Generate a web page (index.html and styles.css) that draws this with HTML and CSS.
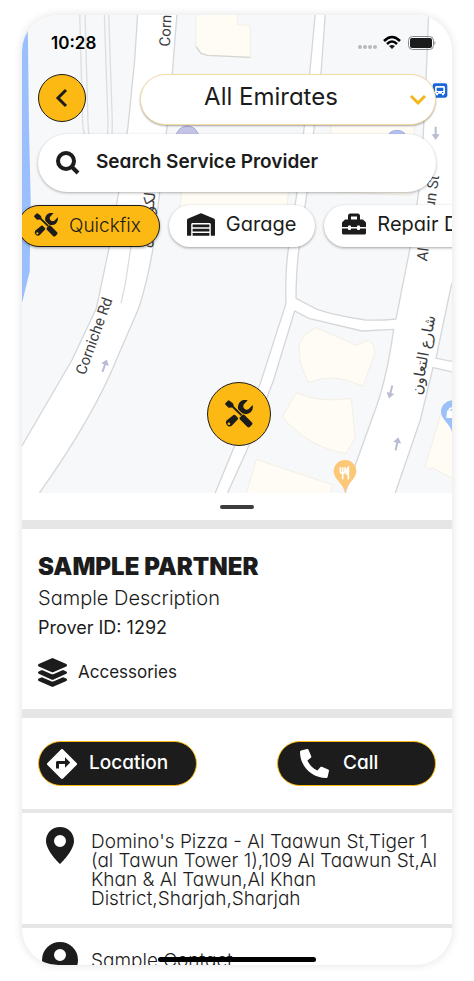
FILE: index.html
```html
<!doctype html>
<html lang="en">
    <head>
        <meta charset="utf-8">
        <meta name="viewport" content="width=device-width, initial-scale=1">
        <title>Sample Partner</title>
        <link rel="stylesheet" href="styles.css">
    </head>
    <body>
        <!-- shared icons -->
        <svg class="is-hidden">
            <symbol id="tools" viewBox="0 0 86 86">
                <path d="M1 10L9 2Q11 0 14 2L25 11 27 19 53 45 49 49 22 23 11 24 1 14Q0 12 1 10z"/>
                <path d="M46 53L54 45Q57 43 60 46L83 69Q86 72 83 76L76 83Q72 86 69 83L46 60Q43 56 46 53z"/>
                <path d="M70 1Q55-4 45 7 37 17 41 29L53 41Q68 47 79 38 88 28 85 15L73 28Q66 32 59 26 54 20 58 13z"/>
                <path fill-rule="evenodd" d="M26 46Q29 44 32 47L39 54Q42 57 39 60L20 80A12 12 0 0 1 4 64zM12 69a4 4 0 1 0 0 8 4 4 0 0 0 0-8z"/>
            </symbol>
        </svg>
        <main class="phone">
            <section class="map">
                <svg class="map-canvas" viewBox="65 45 1290 1434" preserveAspectRatio="xMidYMin slice">
                    <rect class="land" x="65" y="45" width="1290" height="1434"/>
                    <path class="water" d="M60 45H82L86 380 91 600 88 815 66 905H60z"/>

                    <!-- buildings -->
                    <g class="building">
                        <path d="M587 40V140L602 160 622 166 750 172V76L712 74V40z"/>
                        <path d="M992 360H1243L1232 586 990 575z"/>
                        <path d="M545 560H866L858 640H538z"/>
                        <path d="M947 983Q905 1002 896 1040 893 1090 925 1148 1000 1115 1088 1159L1124 1060 1120 1035 1104 1021 1068 1036Q1010 1010 947 983z"/>
                        <path d="M888 1178L846 1250Q920 1340 1037 1361L1064 1315 1053 1195Q960 1210 888 1178z"/>
                        <path d="M768 1378L998 1455 985 1490H735z"/>
                        <path d="M1322 1240L1274 1400 1290 1410 1293 1402 1360 1437V1240z"/>
                    </g>
                    <path class="building-edge" d="M587 140L602 160 622 166 750 172"/>

                    <!-- roads -->
                    <path class="lane" d="M238 40L247 370Q250 400 260 440M254 40L263 370 268 440M312 40L323 370 320 440M325 40L336 370 334 440"/>
                    <g class="road">
                        <path d="M412 40L403 180 383 380 355 578 325 750 288 925 215 1080 40 1380 60 1560 118 1478Q280 1250 350 1075L415 925Q440 850 458 745L478 578 500 380 516 220 530 40z"/>
                        <path d="M1285 40L1277 240 1268 420 1255 578 1230 740 1187 957Q1140 962 1095 960 1000 945 950 928L887 895Q888 800 897 740L920 578 942 378 962 220 975 40H945L928 220 912 378 890 578 865 740Q854 810 857 910L780 1150 645 1478 645 1500H672L682 1478 740 1350 820 1140 883 933 925 955 1085 993 1180 988Q1160 1130 1128 1220L1035 1478V1500H1180L1185 1478 1260 1260 1298 1103 1370 1119V1087L1307 1075 1352 860 1370 800V40z"/>
                    </g>
                    <path class="lane" d="M392 740L375 850 362 910"/>

                    <!-- one way arrows -->
                    <g class="arrow">
                        <path d="M-3 20V-3H-12L0-20 12-3H3V20z" transform="translate(313 1097) rotate(20)"/>
                        <path d="M-3 20V-3H-12L0-20 12-3H3V20z" transform="translate(1306 400) rotate(180)"/>
                        <path d="M-3 20V-3H-12L0-20 12-3H3V20z" transform="translate(1171 1176) rotate(194)"/>
                        <path d="M-3 20V-3H-12L0-20 12-3H3V20z" transform="translate(1190 1331) rotate(12)"/>
                    </g>

                    <!-- street names -->
                    <g class="street">
                        <text transform="translate(508 140) rotate(-87)">Corniche Rd</text>
                        <text transform="translate(254 1127) rotate(-70)">Corniche Rd</text>
                        <text transform="translate(1280 785) rotate(-82)">Al Taawun St</text>
                        <text text-anchor="middle" transform="translate(1284 1068) rotate(-80)">شارع التعاون</text>
                        <text text-anchor="middle" transform="translate(463 600) rotate(-84)">شارع الكورنيش</text>
                    </g>

                    <!-- places -->
                    <circle class="place" cx="561" cy="412" r="34"/>
                    <circle class="place is-blue" cx="1190" cy="425" r="34"/>
                    <rect class="bus" x="1297" y="250" width="44" height="43" rx="7"/>
                    <path fill="#fff" d="M1308 258h22q4 0 4 5v18h-3v5h-6v-5h-12v5h-6v-5h-3v-18q0-5 4-5z"/>
                    <path class="bus" d="M1309 263h20v10h-20zM1309 276h4v3h-4zM1325 276h4v3h-4z"/>
                    <path class="food" d="M1034 1380a34 34 0 0 1 34 34c0 24-28 34-34 65-6-31-34-41-34-65a34 34 0 0 1 34-34z"/>
                    <path class="cutlery" d="M1020 1402v10q0 8 7 8t7-8v-10M1027 1402v36M1044 1438v-36q-6 4-5 20h5"/>
                    <path class="shop" d="M1356 1201a34 34 0 0 0-34 34c0 24 28 34 34 65z"/>
                    <path fill="#fff" d="M1340 1232h16v22h-18zM1344 1232q0-10 12-10v5q-7 0-7 5z"/>
                </svg>

                <button class="pin" type="button" aria-label="Quickfix provider">
                    <svg class="pin-icon"><use href="#tools"/></svg>
                </button>

                <div class="overlay">
                    <div class="status">
                        <span class="time">10:28</span>
                        <svg width="80" height="16" viewBox="0 0 80 16">
                            <g fill="#b9babd">
                                <circle cx="4" cy="12" r="2"/><circle cx="9" cy="12" r="2"/><circle cx="14" cy="12" r="2"/><circle cx="19" cy="12" r="2"/>
                            </g>
                            <path d="M28 6Q36-2 44 6M31 9Q36 4 41 9" fill="none" stroke="#000" stroke-width="2.500"/>
                            <path d="M33 11Q36 9 39 11L36 14z"/>
                            <rect x="52.500" y="1.500" width="25" height="13" rx="4" fill="none" stroke="#8a8a8c"/>
                            <rect x="54" y="3" width="22" height="10" rx="2"/>
                            <path d="M78.500 6q2 2 0 4z" fill="#8a8a8c"/>
                        </svg>
                    </div>
                    <div class="top-row">
                        <button class="back" type="button" aria-label="Back">
                            <svg width="20" height="22" viewBox="0 0 20 22"><path d="M14 3L6 11 14 19"/></svg>
                        </button>
                        <div class="emirates">
                            <select aria-label="Emirate">
                                <option>All Emirates</option>
                                <option>Dubai</option>
                                <option>Sharjah</option>
                            </select>
                            <svg class="chevron" width="18" height="12" viewBox="0 0 18 12"><path d="M2 2L9 9 16 2"/></svg>
                        </div>
                    </div>
                    <label class="search">
                        <svg width="24" height="24" viewBox="0 0 24 24"><circle cx="10" cy="10" r="8"/><path d="M16 16L22 22"/></svg>
                        <input type="search" placeholder="Search Service Provider" aria-label="Search Service Provider">
                    </label>
                    <nav class="chips">
                        <button class="chip is-primary" type="button">
                            <svg width="24" height="24"><use href="#tools"/></svg>
                            Quickfix
                        </button>
                        <button class="chip" type="button">
                            <svg width="28" height="23" viewBox="0 0 640 512"><path d="M504 352H136.400c-4.400 0-8 3.600-8 8l-.1 48c0 4.400 3.600 8 8 8H504c4.400 0 8-3.600 8-8v-48c0-4.400-3.600-8-8-8zm0 96H136.100c-4.400 0-8 3.600-8 8l-.1 48c0 4.400 3.600 8 8 8h368c4.400 0 8-3.600 8-8v-48c0-4.400-3.600-8-8-8zm0-192H136.600c-4.400 0-8 3.600-8 8l-.1 48c0 4.400 3.600 8 8 8H504c4.400 0 8-3.600 8-8v-48c0-4.400-3.600-8-8-8zm106.500-139L338.400 3.700a48.150 48.150 0 0 0-36.900 0L29.500 117C11.700 124.500 0 141.900 0 161.300V504c0 4.400 3.600 8 8 8h80c4.400 0 8-3.600 8-8V256c0-17.600 14.600-32 32.600-32h382.800c18 0 32.600 14.400 32.600 32v248c0 4.400 3.600 8 8 8h80c4.400 0 8-3.600 8-8V161.300c0-19.400-11.700-36.800-29.500-44.300z"/></svg>
                            Garage
                        </button>
                        <button class="chip is-last" type="button">
                            <svg width="24" height="24" viewBox="0 0 512 512"><path d="M502.630 214.630l-45.250-45.250c-6-6-14.140-9.370-22.630-9.370H384V80c0-26.510-21.490-48-48-48H176c-26.510 0-48 21.490-48 48v80H77.250c-8.490 0-16.620 3.370-22.630 9.370L9.370 214.630c-6 6-9.370 14.140-9.370 22.630V320h128v-16c0-8.840 7.160-16 16-16h32c8.840 0 16 7.160 16 16v16h128v-16c0-8.840 7.160-16 16-16h32c8.840 0 16 7.160 16 16v16h128v-82.750c0-8.480-3.370-16.620-9.370-22.620zM320 160H192V96h128v64zm64 208c0 8.840-7.160 16-16 16h-32c-8.840 0-16-7.160-16-16v-16H192v16c0 8.840-7.160 16-16 16h-32c-8.840 0-16-7.160-16-16v-16H0v96c0 17.670 14.330 32 32 32h448c17.670 0 32-14.330 32-32v-96H384v16z"/></svg>
                            Repair D
                        </button>
                    </nav>
                </div>
            </section>

            <div class="handle"></div>

            <section class="partner">
                <h1 class="title">SAMPLE PARTNER</h1>
                <p class="description">Sample Description</p>
                <p class="prover">Prover ID: 1292</p>
                <div class="service">
                    <svg width="29" height="29" viewBox="0 0 512 512"><path d="M12.410 148.020l232.940 105.670c6.800 3.090 14.490 3.090 21.290 0l232.940-105.670c16.550-7.510 16.550-32.520 0-40.030L266.650 2.310a25.607 25.607 0 0 0-21.290 0L12.410 107.980c-16.550 7.510-16.550 32.530 0 40.040zm487.180 88.280l-58.090-26.330-161.640 73.270c-7.560 3.430-15.590 5.170-23.860 5.170s-16.290-1.740-23.860-5.170L70.510 209.970l-58.100 26.330c-16.550 7.500-16.550 32.500 0 40l232.940 105.590c6.800 3.080 14.490 3.080 21.290 0L499.590 276.300c16.550-7.500 16.550-32.500 0-40zm0 127.800l-57.870-26.230-161.860 73.370c-7.560 3.430-15.590 5.170-23.860 5.170s-16.290-1.740-23.860-5.170L70.290 337.870 12.410 364.100c-16.550 7.500-16.550 32.500 0 40l232.940 105.590c6.800 3.080 14.490 3.080 21.290 0L499.590 404.100c16.550-7.500 16.550-32.500 0-40z"/></svg>
                    <span>Accessories</span>
                </div>
            </section>

            <section class="actions">
                <a class="action" href="#location">
                    <svg width="30" height="30" viewBox="2 2 20 20"><path d="M21.710 11.290l-9-9a1 1 0 0 0-1.410 0l-9 9a1 1 0 0 0 0 1.410l9 9c.39.39 1.020.39 1.410 0l9-9a1 1 0 0 0 0-1.410zM14 14.500V12h-4v3H8v-4c0-.55.45-1 1-1h5V7.500l3.500 3.500-3.500 3.500z"/></svg>
                    <span>Location</span>
                </a>
                <a class="action is-call" href="#call">
                    <svg width="29" height="29" viewBox="0 0 512 512"><path d="M497.390 361.800l-112-48a24 24 0 0 0-28 6.900l-49.600 60.600A370.660 370.660 0 0 1 130.600 204.110l60.600-49.600a23.940 23.940 0 0 0 6.900-28l-48-112A24.160 24.160 0 0 0 122.600.61l-104 24A24 24 0 0 0 0 48c0 256.500 207.900 464 464 464a24 24 0 0 0 23.400-18.600l24-104a24.290 24.290 0 0 0-14.010-27.600z"/></svg>
                    <span>Call</span>
                </a>
            </section>

            <section class="detail" id="location">
                <svg width="36" height="37" viewBox="0 0 36 37"><path fill-rule="evenodd" d="M18 0C10 0 4 6 4 14c0 10 14 23 14 23s14-13 14-23C32 6 26 0 18 0zm0 8a6 6 0 1 1 0 12 6 6 0 0 1 0-12z"/></svg>
                <address>Domino's Pizza - Al Taawun St,Tiger 1 (al Tawun Tower 1),109 Al Taawun St,Al Khan &amp; Al Tawun,Al Khan District,Sharjah,Sharjah</address>
            </section>

            <section class="detail" id="call">
                <svg width="36" height="36" viewBox="0 0 36 36"><path fill-rule="evenodd" d="M18 0a18 18 0 1 1 0 36 18 18 0 0 1 0-36zm0 7a6 6 0 1 0 0 12 6 6 0 0 0 0-12zm0 17c-4 0-10 2-10 5q10 7 20 0c0-3-6-5-10-5z"/></svg>
                <p>Sample Contact</p>
            </section>

            <div class="home-bar"></div>
        </main>
    </body>
</html>
```

FILE: styles.css
```css
* {
    box-sizing: border-box;
}
body {
    margin: 0;
    background-color: #fff;
    color: #1c1c1c;
    font-family: Inter, "Open Sans", sans-serif;
    font-feature-settings: "cv11";
    font-size: 19px;
}
h1, p, address {
    margin: 0;
    font-style: normal;
}
button, select, input {
    font: inherit;
    font-feature-settings: inherit;
    color: inherit;
}
svg {
    flex-shrink: 0;
    fill: #1c1c1c;
}
.is-hidden {
    display: none;
}
.phone {
    position: relative;
    display: flex;
    flex-direction: column;
    height: calc(100vh - 31px);
    margin: 15px 22px 16px;
    overflow: hidden;
    border-radius: 36px;
    background-color: #fff;
    box-shadow: 0 0 10px rgba(0, 0, 0, 0.12);
}
.phone > * {
    flex-shrink: 0;
}

/* map */
.map {
    position: relative;
    height: 478px;
    overflow: hidden;
}
.map-canvas {
    position: absolute;
    width: 100%;
    height: 100%;
}
.land {
    fill: #f7f8fa;
}
.water {
    fill: #9abffc;
}
.building {
    fill: #fffcf5;
    stroke: #f3efe6;
    stroke-width: 3;
}
.building-edge {
    fill: none;
    stroke: #d6d5d2;
    stroke-width: 4;
}
.road {
    fill: #fff;
    stroke: #d6d7db;
    stroke-width: 4;
}
.lane {
    fill: none;
    stroke: #dddee1;
    stroke-width: 4;
}
.arrow {
    fill: #b9bcd3;
}
.street {
    fill: #3c3d40;
    font-family: Roboto, "DejaVu Sans", sans-serif;
    font-size: 45px;
}
.place {
    fill: #c3c4e8;
    stroke: #a9aad6;
    stroke-width: 3;
}
.place.is-blue {
    fill: #b4c4f6;
}
.bus {
    fill: #1967d9;
}
.food {
    fill: #fcc878;
}
.shop {
    fill: #9dc0f8;
}
.cutlery {
    fill: none;
    stroke: #fff;
    stroke-width: 5;
}
.pin {
    position: absolute;
    top: 367px;
    left: 50%;
    display: grid;
    place-items: center;
    width: 64px;
    height: 64px;
    margin-left: -30px;
    padding: 0;
    border: 1px solid #1c1c1c;
    border-radius: 50%;
    background-color: #fdb913;
}
.pin-icon {
    width: 28px;
    height: 28px;
}

/* controls over the map */
.overlay {
    position: relative;
    padding: 20px 16px 0;
}
.status {
    display: flex;
    justify-content: space-between;
    align-items: center;
    height: 16px;
    margin-bottom: 23px;
    padding-left: 13px;
}
.time {
    color: #000;
    font-size: 17px;
    font-weight: 600;
}
.top-row {
    display: flex;
    justify-content: space-between;
}
.back {
    display: grid;
    place-items: center;
    width: 48px;
    height: 48px;
    padding: 0;
    border: 1px solid #1c1c1c;
    border-radius: 50%;
    background-color: #fdb913;
}
.back path, .chevron path, .search path, .search circle {
    fill: none;
    stroke: #1c1c1c;
    stroke-width: 3;
}
.emirates {
    position: relative;
    width: 296px;
}
.emirates select {
    width: 100%;
    height: 51px;
    padding: 0 48px 6px 14px;
    border: 1px solid #f6dda6;
    border-radius: 26px;
    background-color: #fff;
    box-shadow: 0 1px 2px rgba(0, 0, 0, 0.35);
    font-size: 24px;
    text-align: center;
    text-align-last: center;
    appearance: none;
}
.chevron {
    position: absolute;
    top: 20px;
    right: 9px;
}
.chevron path {
    stroke: #f3b61b;
}
.search {
    display: flex;
    align-items: center;
    gap: 16px;
    height: 58px;
    margin-top: 9px;
    padding: 0 18px;
    border-radius: 29px;
    background-color: #fff;
    box-shadow: 0 1px 3px rgba(0, 0, 0, 0.3);
}
.search path, .search circle {
    stroke-width: 4;
}
.search input {
    flex: 1;
    min-width: 0;
    padding: 0 0 4px;
    border: 0;
    background: none;
    font-weight: 600;
}
.search input::placeholder {
    color: #1c1c1c;
    opacity: 1;
}
.chips {
    display: flex;
    gap: 9px;
    margin: 8px -16px 0 -20px;
    padding: 5px 0;
    overflow: hidden;
}
.chip {
    display: flex;
    flex-shrink: 0;
    align-items: center;
    gap: 11px;
    height: 42px;
    padding: 0 19px 4px 18px;
    border: 0;
    border-radius: 21px;
    background-color: #fff;
    box-shadow: 0 1px 3px rgba(0, 0, 0, 0.35);
    font-size: 20px;
}
.chip.is-primary {
    padding: 0 18px 2px 15px;
    border: 1px solid #1c1c1c;
    background-color: #fdb913;
    font-size: 19px;
    font-weight: 300;
}
.chip.is-last {
    padding-right: 48px;
}

/* bottom sheet */
.handle {
    width: 34px;
    height: 4px;
    margin: 12px auto 11px;
    border-radius: 2px;
    background-color: #3c3c3c;
}
.partner {
    padding: 22px 16px;
    border-top: 9px solid #e6e6e6;
}
.title {
    font-size: 24px;
    font-weight: 900;
    line-height: 32px;
}
.description {
    font-size: 20px;
    font-weight: 300;
    line-height: 30px;
}
.prover {
    font-size: 18px;
    line-height: 30px;
}
.service {
    display: flex;
    align-items: center;
    gap: 11px;
    margin-top: 15px;
    font-size: 17px;
}
.service span {
    padding-bottom: 2px;
}
.actions {
    display: flex;
    justify-content: space-between;
    padding: 23px 16px;
    border-top: 9px solid #e6e6e6;
}
.action {
    display: flex;
    align-items: center;
    gap: 12px;
    width: 159px;
    height: 45px;
    padding-left: 8px;
    border: 1px solid #fdb913;
    border-radius: 23px;
    background-color: #1c1c1c;
    color: #fff;
    font-weight: 500;
    text-decoration: none;
}
.action svg {
    fill: #fff;
}
.action span {
    padding-bottom: 2px;
}
.action.is-call {
    gap: 14px;
    padding-left: 22px;
}
.detail {
    display: flex;
    gap: 13px;
    padding: 14px 10px 12px 20px;
    border-top: 4px solid #e6e6e6;
    font-size: 19px;
    font-weight: 300;
    line-height: 19px;
}
.detail address {
    padding: 5px 0 4px;
}
.detail p {
    padding: 9px 0 8px;
}
.home-bar {
    position: absolute;
    bottom: 3px;
    left: 50%;
    width: 158px;
    height: 5px;
    margin-left: -79px;
    border-radius: 3px;
    background-color: #000;
}
```
